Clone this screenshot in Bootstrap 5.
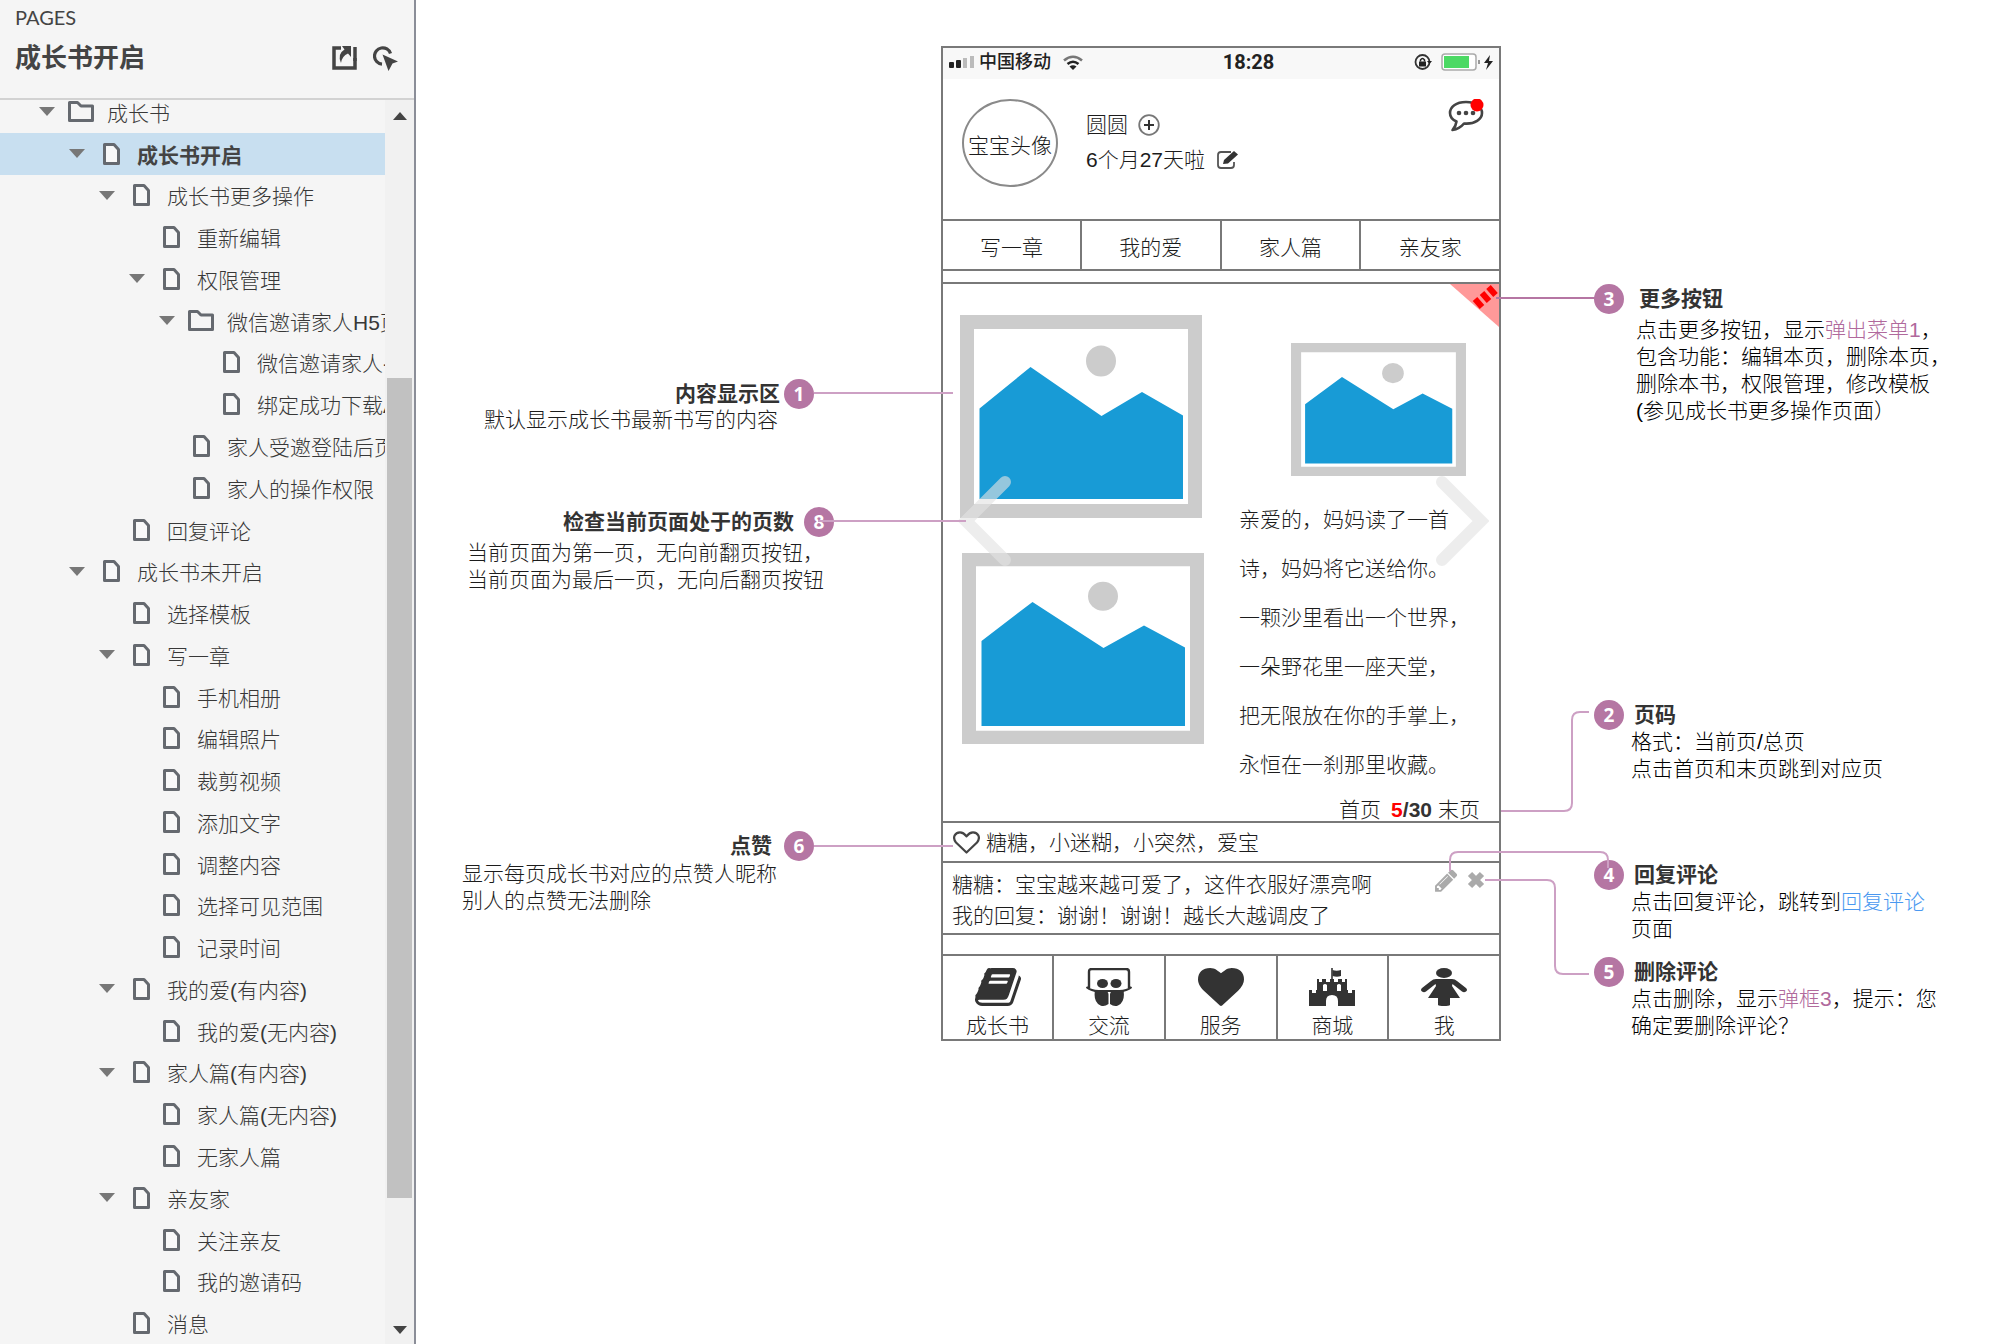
<!DOCTYPE html>
<html lang="zh-CN">
<head>
<meta charset="utf-8">
<meta name="viewport" content="width=device-width, initial-scale=1">
<title>成长书开启</title>
<link href="https://cdn.jsdelivr.net/npm/bootstrap@5.3.0/dist/css/bootstrap.min.css" rel="stylesheet">
<style>
  body { font-family: "Liberation Sans", "Noto Sans CJK SC", sans-serif; font-size: 21px; line-height: 27px; font-weight: 300; color: #1c1c1c; background: #fff; }
  a { color: inherit; text-decoration: none; }
  .plain-btn { background: none; border: 0; padding: 0; color: inherit; line-height: 0; }
  /* sidebar */
  .side { width: 416px; background: #f5f5f5; border-right: 2px solid #8b8e98; }
  .side-head { height: 100px; border-bottom: 2px solid #d2d2d2; padding: 3px 16px 0 15px; color: #444; }
  .side-label { font-family: Lato, sans-serif; font-size: 20px; line-height: 28px; font-weight: 400; }
  .side-title { font-size: 26px; line-height: 54px; font-weight: 700; margin: 0; }
  .tree { margin-top: -9px; height: calc(100% + 9px); color: #383838; }
  .tree li { flex: 1 1 0; min-height: 0; padding-left: calc(39px + 30px * var(--lv, 0)); gap: 13px; white-space: nowrap; }
  .tree a { padding-top: 3px; }
  .tree .current { background: #c8dff0; font-weight: 700; color: #444; }
  .twist { width: 16px; flex: none; }
  .kind { width: 26px; flex: none; text-align: center; line-height: 0; color: #65696f; }
  .bar-track { width: 29px; background: #f1f1f1; padding: 12px 2px 10px; }
  .bar-thumb { background: #c1c1c1; width: 25px; flex: 821; }
  /* phone */
  .phone { width: 560px; border: 2px solid #797979; margin-top: 46px; }
  .line-t { border-top: 2px solid #797979; }
  .line-b { border-bottom: 2px solid #797979; }
  .status { height: 31px; background: #f8f8f8; padding: 0 5px 3px 6px; font-size: 18px; font-weight: 500; color: #222; }
  .clock { font-family: Roboto, sans-serif; font-weight: 700; font-size: 20px; }
  .profile { height: 140px; padding: 20px 15px 0 19px; }
  .avatar { width: 96px; height: 88px; border: 2px solid #8a8a8a; border-radius: 50%; white-space: nowrap; padding-top: 5px; }
  .who { padding: 12px 0 0 28px; gap: 8px; }
  .tabs a { height: 48px; line-height: 54px; text-align: center; flex: 1 1 0; }
  .tabs a:first-child { flex: 0 0 137px; }
  .dock a:first-child { flex: 0 0 109px; }
  .tabs a + a, .dock a + a { border-left: 2px solid #797979; }
  .tabs { margin-bottom: 11px; }
  .pages { height: 537px; padding-left: 17px; gap: 35px; }
  .pages-left { width: 244px; padding-top: 31px; }
  .pages-right { width: 244px; padding-top: 59px; }
  .poem { line-height: 49px; margin: 19px 0 10px; white-space: nowrap; }
  .pager { line-height: 22px; gap: 6px; padding-right: 3px; }
  .pager b { font-weight: 700; color: #333; }
  .corner { position: absolute; top: 0; right: 0; }
  .turn-l { position: absolute; top: 189px; left: 15px; }
  .turn-r { position: absolute; top: 189px; right: 10px; }
  .likes { height: 40px; padding: 0 10px; gap: 6px; }
  .comments { height: 72px; padding: 6px 14px 0 9px; line-height: 31px; }
  .dock { margin-top: 19px; }
  .dock a { flex: 1 1 0; height: 83px; padding-top: 12px; text-align: center; line-height: 40px; }
  .dock svg { display: block; margin: 0 auto; }
  /* notes */
  .notes-l { width: 525px; padding-top: 380px; }
  .notes-r { padding-top: 285px; color: #000; }
  .note-head { height: 27px; gap: 10px; }
  .note-head h2 { font-size: 21px; line-height: 27px; font-weight: 700; color: #333; margin: 0; }
  .notes-l .note-head { padding-right: 127px; justify-content: flex-end; gap: 4px; }
  .notes-r .note-head { padding-left: 93px; }
  .notes-r p { padding-left: 130px; }
  .pin { width: 30px; height: 30px; flex: none; border-radius: 50%; background: #b576a3; color: #fff; font: 700 19px/30px "Open Sans", sans-serif; text-align: center; }
  .wires { position: absolute; left: 0; top: 0; pointer-events: none; }
  .mauve { color: #b0699c; }
  .sky { color: #4a98f0; }
</style>
<script src="https://cdn.jsdelivr.net/npm/bootstrap@5.3.0/dist/js/bootstrap.bundle.min.js"></script>
</head>
<body>
<svg width="0" height="0" class="position-absolute" aria-hidden="true">
  <symbol id="tri" viewBox="0 0 16 9"><path d="M0 0h16L8 9z" fill="#777"/></symbol>
  <symbol id="page" viewBox="0 0 17 22"><path d="M1.5 1.5h9.5l4.5 5v14h-14z" fill="#f8f8f8" stroke="currentColor" stroke-width="3" stroke-linejoin="round"/></symbol>
  <symbol id="folder" viewBox="0 0 26 21"><path d="M1.5 1.5h8l3.500 3.500h11.500v14.500h-23z" fill="none" stroke="currentColor" stroke-width="3" stroke-linejoin="round"/></symbol>
  <symbol id="photo" viewBox="0 0 242 203" preserveAspectRatio="none">
    <path d="M0 0h242v203H0z" fill="#ccc"/><path d="M14 14h214v175H14z" fill="#fff"/>
    <ellipse cx="141" cy="46" rx="15" ry="15.500" fill="#ccc"/>
    <path d="M19.500 93.500L70.500 52 141.500 101 182 77l41 23.500V184H19.500z" fill="#189bd6"/>
  </symbol>
</svg>

<div class="d-flex vh-100 overflow-hidden">
  <aside class="side d-flex flex-column flex-shrink-0">
    <header class="side-head">
      <div class="side-label text-uppercase">Pages</div>
      <div class="d-flex align-items-center">
        <h1 class="side-title me-auto">成长书开启</h1>
        <button class="plain-btn me-3" aria-label="在新窗口打开"><svg width="25" height="24" viewBox="0 0 25 24"><path d="M9 2H2v20h21V12" fill="none" stroke="#444" stroke-width="3.500"/><path d="M23 1v14" stroke="#444" stroke-width="3.500"/><path d="M10 0h9v11l-3-3.500Q10 10 9 17 5 8 12.500 3.500z" fill="#444"/></svg></button>
        <button class="plain-btn" aria-label="高亮交互元素"><svg width="25" height="25" viewBox="0 0 25 25"><path d="M17.500 7.500A8.200 8.200 0 1 0 9 18.200" fill="none" stroke="#444" stroke-width="3.200"/><path d="M9.500 8.500L25 15.500l-5.500 2-4 7.500z" fill="#444"/></svg></button>
      </div>
    </header>
    <div class="d-flex flex-fill overflow-hidden">
      <nav class="flex-fill overflow-hidden" aria-label="页面">
        <ul class="tree list-unstyled d-flex flex-column mb-0">
          <li class="d-flex align-items-center"><button class="plain-btn twist" aria-label="折叠"><svg width="16" height="9"><use href="#tri"/></svg></button><span class="kind"><svg width="26" height="21"><use href="#folder"/></svg></span><a href="#">成长书</a></li>
          <li class="d-flex align-items-center current" style="--lv:1"><button class="plain-btn twist" aria-label="折叠"><svg width="16" height="9"><use href="#tri"/></svg></button><span class="kind"><svg width="17" height="22"><use href="#page"/></svg></span><a href="#">成长书开启</a></li>
          <li class="d-flex align-items-center" style="--lv:2"><button class="plain-btn twist" aria-label="折叠"><svg width="16" height="9"><use href="#tri"/></svg></button><span class="kind"><svg width="17" height="22"><use href="#page"/></svg></span><a href="#">成长书更多操作</a></li>
          <li class="d-flex align-items-center" style="--lv:3"><span class="twist"></span><span class="kind"><svg width="17" height="22"><use href="#page"/></svg></span><a href="#">重新编辑</a></li>
          <li class="d-flex align-items-center" style="--lv:3"><button class="plain-btn twist" aria-label="折叠"><svg width="16" height="9"><use href="#tri"/></svg></button><span class="kind"><svg width="17" height="22"><use href="#page"/></svg></span><a href="#">权限管理</a></li>
          <li class="d-flex align-items-center" style="--lv:4"><button class="plain-btn twist" aria-label="折叠"><svg width="16" height="9"><use href="#tri"/></svg></button><span class="kind"><svg width="26" height="21"><use href="#folder"/></svg></span><a href="#">微信邀请家人H5页</a></li>
          <li class="d-flex align-items-center" style="--lv:5"><span class="twist"></span><span class="kind"><svg width="17" height="22"><use href="#page"/></svg></span><a href="#">微信邀请家人-</a></li>
          <li class="d-flex align-items-center" style="--lv:5"><span class="twist"></span><span class="kind"><svg width="17" height="22"><use href="#page"/></svg></span><a href="#">绑定成功下载A</a></li>
          <li class="d-flex align-items-center" style="--lv:4"><span class="twist"></span><span class="kind"><svg width="17" height="22"><use href="#page"/></svg></span><a href="#">家人受邀登陆后页</a></li>
          <li class="d-flex align-items-center" style="--lv:4"><span class="twist"></span><span class="kind"><svg width="17" height="22"><use href="#page"/></svg></span><a href="#">家人的操作权限</a></li>
          <li class="d-flex align-items-center" style="--lv:2"><span class="twist"></span><span class="kind"><svg width="17" height="22"><use href="#page"/></svg></span><a href="#">回复评论</a></li>
          <li class="d-flex align-items-center" style="--lv:1"><button class="plain-btn twist" aria-label="折叠"><svg width="16" height="9"><use href="#tri"/></svg></button><span class="kind"><svg width="17" height="22"><use href="#page"/></svg></span><a href="#">成长书未开启</a></li>
          <li class="d-flex align-items-center" style="--lv:2"><span class="twist"></span><span class="kind"><svg width="17" height="22"><use href="#page"/></svg></span><a href="#">选择模板</a></li>
          <li class="d-flex align-items-center" style="--lv:2"><button class="plain-btn twist" aria-label="折叠"><svg width="16" height="9"><use href="#tri"/></svg></button><span class="kind"><svg width="17" height="22"><use href="#page"/></svg></span><a href="#">写一章</a></li>
          <li class="d-flex align-items-center" style="--lv:3"><span class="twist"></span><span class="kind"><svg width="17" height="22"><use href="#page"/></svg></span><a href="#">手机相册</a></li>
          <li class="d-flex align-items-center" style="--lv:3"><span class="twist"></span><span class="kind"><svg width="17" height="22"><use href="#page"/></svg></span><a href="#">编辑照片</a></li>
          <li class="d-flex align-items-center" style="--lv:3"><span class="twist"></span><span class="kind"><svg width="17" height="22"><use href="#page"/></svg></span><a href="#">裁剪视频</a></li>
          <li class="d-flex align-items-center" style="--lv:3"><span class="twist"></span><span class="kind"><svg width="17" height="22"><use href="#page"/></svg></span><a href="#">添加文字</a></li>
          <li class="d-flex align-items-center" style="--lv:3"><span class="twist"></span><span class="kind"><svg width="17" height="22"><use href="#page"/></svg></span><a href="#">调整内容</a></li>
          <li class="d-flex align-items-center" style="--lv:3"><span class="twist"></span><span class="kind"><svg width="17" height="22"><use href="#page"/></svg></span><a href="#">选择可见范围</a></li>
          <li class="d-flex align-items-center" style="--lv:3"><span class="twist"></span><span class="kind"><svg width="17" height="22"><use href="#page"/></svg></span><a href="#">记录时间</a></li>
          <li class="d-flex align-items-center" style="--lv:2"><button class="plain-btn twist" aria-label="折叠"><svg width="16" height="9"><use href="#tri"/></svg></button><span class="kind"><svg width="17" height="22"><use href="#page"/></svg></span><a href="#">我的爱(有内容)</a></li>
          <li class="d-flex align-items-center" style="--lv:3"><span class="twist"></span><span class="kind"><svg width="17" height="22"><use href="#page"/></svg></span><a href="#">我的爱(无内容)</a></li>
          <li class="d-flex align-items-center" style="--lv:2"><button class="plain-btn twist" aria-label="折叠"><svg width="16" height="9"><use href="#tri"/></svg></button><span class="kind"><svg width="17" height="22"><use href="#page"/></svg></span><a href="#">家人篇(有内容)</a></li>
          <li class="d-flex align-items-center" style="--lv:3"><span class="twist"></span><span class="kind"><svg width="17" height="22"><use href="#page"/></svg></span><a href="#">家人篇(无内容)</a></li>
          <li class="d-flex align-items-center" style="--lv:3"><span class="twist"></span><span class="kind"><svg width="17" height="22"><use href="#page"/></svg></span><a href="#">无家人篇</a></li>
          <li class="d-flex align-items-center" style="--lv:2"><button class="plain-btn twist" aria-label="折叠"><svg width="16" height="9"><use href="#tri"/></svg></button><span class="kind"><svg width="17" height="22"><use href="#page"/></svg></span><a href="#">亲友家</a></li>
          <li class="d-flex align-items-center" style="--lv:3"><span class="twist"></span><span class="kind"><svg width="17" height="22"><use href="#page"/></svg></span><a href="#">关注亲友</a></li>
          <li class="d-flex align-items-center" style="--lv:3"><span class="twist"></span><span class="kind"><svg width="17" height="22"><use href="#page"/></svg></span><a href="#">我的邀请码</a></li>
          <li class="d-flex align-items-center" style="--lv:2"><span class="twist"></span><span class="kind"><svg width="17" height="22"><use href="#page"/></svg></span><a href="#">消息</a></li>
        </ul>
      </nav>
      <div class="bar-track d-flex flex-column align-items-center flex-shrink-0" aria-hidden="true">
        <svg width="14" height="8"><path d="M7 0l7 8H0z" fill="#444"/></svg>
        <div style="flex:258"></div><div class="bar-thumb"></div><div style="flex:128"></div>
        <svg width="14" height="8"><path d="M0 0h14L7 8z" fill="#444"/></svg>
      </div>
    </div>
  </aside>

  <main class="d-flex align-items-start flex-fill position-relative">
    <section class="notes-l flex-shrink-0">
      <article>
        <div class="note-head d-flex align-items-center"><h2>内容显示区</h2><span class="pin">1</span></div>
        <p style="margin:-1px 0 75px 68px">默认显示成长书最新书写的内容</p>
      </article>
      <article>
        <div class="note-head d-flex align-items-center" style="padding-right:107px;gap:10px"><h2>检查当前页面处于的页数</h2><span class="pin">8</span></div>
        <p style="margin:4px 0 239px 51px">当前页面为第一页，无向前翻页按钮，<br>当前页面为最后一页，无向后翻页按钮</p>
      </article>
      <article>
        <div class="note-head d-flex align-items-center" style="gap:12px"><h2>点赞</h2><span class="pin">6</span></div>
        <p style="margin:1px 0 0 46px">显示每页成长书对应的点赞人昵称<br>别人的点赞无法删除</p>
      </article>
    </section>

    <section class="phone flex-shrink-0">
      <div class="status d-flex align-items-center">
        <svg width="26" height="12" class="me-1"><g fill="#222"><rect y="6" width="5" height="6" rx="1"/><rect x="7" y="4" width="5" height="8" rx="1"/></g><g fill="#bbb"><rect x="14" y="2" width="4" height="10"/><rect x="21" width="4" height="12"/></g></svg>
        <span>中国移动</span>
        <svg width="20" height="15" viewBox="0 0 20 15" style="margin-left:12px"><g fill="none" stroke="#222" stroke-width="2.600"><path d="M1 5.500Q10-2 19 5.500" stroke="#777"/><path d="M4.500 9Q10 4.500 15.500 9"/></g><path d="M10 15L6.500 11.500q3.500-2.500 7 0z" fill="#222"/></svg>
        <span class="clock mx-auto">18:28</span>
        <svg width="80" height="18" viewBox="0 0 80 18"><circle cx="8.500" cy="9" r="7" fill="none" stroke="#333" stroke-width="1.800"/><path d="M5 8.500h7v5H5z" fill="#222"/><path d="M6.500 8.500V7q2-3 4 0v1.500" fill="none" stroke="#222" stroke-width="1.500"/><path d="M13 8h5l-2.500 3z" fill="#222"/><rect x="28" y="1" width="34" height="16" rx="3" fill="#fff" stroke="#aaa" stroke-width="1.500"/><rect x="30" y="3" width="25" height="12" fill="#4cd964"/><path d="M65 7v4" stroke="#999" stroke-width="2"/><path d="M76 2l-6 8h4l-2 7 7-9h-4z" fill="#222"/></svg>
      </div>
      <div class="profile d-flex">
        <div class="avatar d-flex align-items-center justify-content-center flex-shrink-0">宝宝头像</div>
        <div class="who d-flex flex-column me-auto">
          <div class="d-flex align-items-center gap-2 text-nowrap">圆圆 <button class="plain-btn" aria-label="添加"><svg width="24" height="22" viewBox="0 0 24 22"><circle cx="13" cy="11" r="9.800" fill="none" stroke="#777" stroke-width="1.800"/><path d="M13 6v10M8 11h10" stroke="#333" stroke-width="2"/></svg></button></div>
          <div class="d-flex align-items-center gap-2 text-nowrap">6个月27天啦 <button class="plain-btn" aria-label="编辑"><svg width="26" height="20" viewBox="0 0 26 20"><path d="M18 2H8Q5 2 5 5v10q0 3 3 3h10q3 0 3-3v-3" fill="none" stroke="#555" stroke-width="1.800"/><path d="M10 14l1-4L21 1l4 3.500-10 9z" fill="#333"/></svg></button></div>
        </div>
        <button class="plain-btn align-self-start" aria-label="消息"><svg width="36" height="34" viewBox="0 0 36 34"><path d="M18 3C8 3 2 8 2 14c0 4 3 7 6.500 8.500Q8 27 4.500 31q7-1 11.500-6.500C27 25.500 34 20 34 14S28 3 18 3z" fill="#fff" stroke="#444" stroke-width="2.600" stroke-linejoin="round"/><g fill="#444"><circle cx="11" cy="14" r="2.300"/><circle cx="18" cy="14" r="2.300"/><circle cx="25" cy="14" r="2.300"/></g><circle cx="29" cy="6" r="6.500" fill="#f00"/></svg></button>
      </div>
      <nav class="tabs d-flex line-t line-b"><a href="#">写一章</a><a href="#">我的爱</a><a href="#">家人篇</a><a href="#">亲友家</a></nav>
      <div class="line-t line-b">
        <div class="pages d-flex position-relative">
          <div class="pages-left flex-shrink-0">
            <svg width="242" height="203" class="d-block"><use href="#photo"/></svg>
            <svg width="242" height="191" class="d-block ms-auto" style="margin-top:35px"><use href="#photo" height="191" width="242"/></svg>
          </div>
          <div class="pages-right">
            <svg width="175" height="133" class="d-block" style="margin-left:52px"><use href="#photo" width="175" height="133"/></svg>
            <p class="poem">亲爱的，妈妈读了一首<br>诗，妈妈将它送给你。<br>一颗沙里看出一个世界，<br>一朵野花里一座天堂，<br>把无限放在你的手掌上，<br>永恒在一刹那里收藏。</p>
            <div class="pager d-flex justify-content-end text-nowrap"><a href="#" class="me-1">首页</a><b><span style="color:#f00">5</span>/30</b><a href="#">末页</a></div>
          </div>
          <button class="plain-btn corner" aria-label="更多"><svg width="49" height="43"><path d="M0 0h49v43z" fill="#f99"/><path d="M25 15l7 8M32 9l7 8M38.500 3l7 8" stroke="#f00" stroke-width="6"/></svg></button>
          <button class="plain-btn turn-l" aria-label="上一页"><svg width="54" height="96"><path d="M47 9L8 48l39 39" fill="none" stroke="#e2e2e2" stroke-opacity=".62" stroke-width="12" stroke-linecap="round"/></svg></button>
          <button class="plain-btn turn-r" aria-label="下一页"><svg width="54" height="96"><path d="M7 9l39 39L7 87" fill="none" stroke="#e2e2e2" stroke-opacity=".62" stroke-width="12" stroke-linecap="round"/></svg></button>
        </div>
      </div>
      <div class="likes d-flex align-items-center line-b">
        <svg width="27" height="23" viewBox="0 0 27 23"><path d="M13.500 21.500L3 11.500C-1 6.500 2 1.300 7 1.300c3.500 0 5 2 6.500 4 1.500-2 3-4 6.500-4 5 0 8 5.200 4 10.200z" fill="none" stroke="#444" stroke-width="2.200" stroke-linejoin="round"/></svg>
        <span>糖糖，小迷糊，小突然，爱宝</span>
      </div>
      <div class="comments d-flex line-b">
        <div class="me-auto text-nowrap">糖糖：宝宝越来越可爱了，这件衣服好漂亮啊<br>我的回复：谢谢！谢谢！越长大越调皮了</div>
        <button class="plain-btn align-self-start me-2" aria-label="回复"><svg width="24" height="24" viewBox="200 100 1500 1650"><path fill="#aaa" d="M491 1536l91-91-235-235-91 91v107h128v128h107zm523-928q0-22-22-22-10 0-17 7l-542 542q-7 7-7 17 0 22 22 22 10 0 17-7l542-542q7-7 7-17zm-54-192l416 416-832 832h-416v-416zm683 96q0 53-37 90l-166 166-416-416 166-165q36-38 90-38 53 0 91 38l235 234q37 39 37 91z"/></svg></button>
        <button class="plain-btn align-self-start" aria-label="删除"><svg width="18" height="22"><path d="M3 5l12 12M15 5L3 17" stroke="#aaa" stroke-width="6"/></svg></button>
      </div>
      <nav class="dock d-flex line-t">
        <a href="#"><svg width="46" height="38" viewBox="64 128 1664 1536" preserveAspectRatio="none"><path fill="#333" d="M1703 478q40 57 18 129l-275 906q-19 64-76.500 107.500t-122.500 43.500h-923q-77 0-148.500-53.500t-99.500-131.500q-24-67-2-127 0-4 3-27t4-37q1-8-3-21.500t-3-19.500q2-11 8-21t16.500-23.500 16.500-23.500q23-38 45-91.500t30-91.500q3-10 .5-30t-.5-28q3-11 17-28t17-23q21-36 42-92t25-90q1-9-2.500-32t.5-28q4-13 22-30.500t22-22.500q19-26 42.500-84.500t27.500-96.500q1-8-3-25.500t-2-26.500q2-8 9-18t18-23 17-21q8-12 16.500-30.500t15-35 16-36 19.500-32 26.500-23.500 36-11.500 47.500 5.500l-1 3q38-9 51-9h761q74 0 114 56t18 130l-274 906q-36 119-71.500 153.500t-128.500 34.500h-869q-27 0-38 15-11 16-1 43 24 70 144 70h923q29 0 56-15.500t35-41.500l300-987q7-22 5-57 38 15 59 43zm-1064 2q-4 13 2 22.500t20 9.500h608q13 0 25.500-9.500t16.500-22.500l21-64q4-13-2-22.500t-20-9.500h-608q-13 0-25.500 9.500t-16.500 22.500zm-83 256q-4 13 2 22.500t20 9.500h608q13 0 25.500-9.500t16.500-22.500l21-64q4-13-2-22.500t-20-9.500h-608q-13 0-25.500 9.500t-16.500 22.500z"/></svg>成长书</a>
        <a href="#"><svg width="46" height="38" viewBox="0 0 46 38"><path d="M3 20V4q0-3 3-3h34q3 0 3 3v16" fill="none" stroke="#333" stroke-width="2.400"/><path d="M.5 19q5 4.500 14 4h17q9 .5 14-4" fill="none" stroke="#333" stroke-width="2"/><ellipse cx="16.500" cy="15.500" rx="5.500" ry="4.500" fill="#333"/><ellipse cx="30" cy="15.500" rx="5.500" ry="4.500" fill="#333"/><path d="M9 22q6 1 9 .5 4.500.5 4.500 4V36q-4 3-8 1.500Q7 34 9 22zM37.500 22q-6 1-9 .5-4.500.5-4.500 4V36q4 3 8 1.500Q39.500 34 37.500 22z" fill="#333"/></svg>交流</a>
        <a href="#"><svg width="46" height="38" viewBox="0 128 1792 1536" preserveAspectRatio="none"><path fill="#333" d="M896 1664q-26 0-44-18l-624-602q-10-8-27.500-26t-55.500-65.500-68-97.500-53.500-121-23.500-138q0-220 127-344t351-124q62 0 126.500 21.500t120 58 95.500 68.500 76 68q36-36 76-68t95.500-68.500 120-58 126.500-21.500q224 0 351 124t127 344q0 221-229 450l-623 600q-18 18-44 18z"/></svg>服务</a>
        <a href="#"><svg width="46" height="38" viewBox="0 0 46 38"><path d="M0 22h3v3h4v-3h1V11h2v3h3v-3h4v3h4v-3h4v3h4v-3h4v3h3v-3h2v11h1v3h4v-3h3v16H29v-5q0-6-6-6t-6 6v5H0zM14 17v6h4v-6q-2-2-4 0zM28 17v6h4v-6q-2-2-4 0z" fill="#333" fill-rule="evenodd"/><path d="M23 12V0" stroke="#333" stroke-width="1.600"/><path d="M23.500 2q4 1.500 8.500 0v6q-4 1.500-8.500 0z" fill="#333"/></svg>商城</a>
        <a href="#"><svg width="46" height="38" viewBox="0 0 46 38"><ellipse cx="23" cy="5" rx="8" ry="5" fill="#333"/><path d="M15 11h16q3 0 5 2l9 7q2 2 0 3.500t-4 0L31.500 16l-.5 2 8 12H29v7q-1 1-6 1t-6-1v-7H7l8-12-.5-2L5 23.500q-2 1.500-4 0T1 20l9-7q2-2 5-2z" fill="#333"/></svg>我</a>
      </nav>
    </section>

    <section class="notes-r flex-fill">
      <article>
        <div class="note-head d-flex align-items-center" style="gap:15px"><span class="pin">3</span><h2>更多按钮</h2></div>
        <p style="margin:4px 0 277px 5px">点击更多按钮，显示<a href="#" class="mauve">弹出菜单1</a>，<br>包含功能：编辑本页，删除本页，<br>删除本书，权限管理，修改模板<br>(参见成长书更多操作页面）</p>
      </article>
      <article>
        <div class="note-head d-flex align-items-center"><span class="pin">2</span><h2>页码</h2></div>
        <p style="margin-bottom:79px">格式：当前页/总页<br>点击首页和末页跳到对应页</p>
      </article>
      <article>
        <div class="note-head d-flex align-items-center"><span class="pin">4</span><h2>回复评论</h2></div>
        <p class="mb-3">点击回复评论，跳转到<a href="#" class="sky">回复评论</a><br>页面</p>
      </article>
      <article>
        <div class="note-head d-flex align-items-center"><span class="pin">5</span><h2>删除评论</h2></div>
        <p class="mb-0">点击删除，显示<a href="#" class="mauve">弹框3</a>，提示：您<br>确定要删除评论？</p>
      </article>
    </section>

    <svg class="wires" width="1582" height="1344" viewBox="416 0 1582 1344" aria-hidden="true">
      <g fill="none" stroke="#cda0c4" stroke-width="2">
        <path d="M814 393h139M818 521h148M814 846h139"/>
        <path d="M1496 298h99" stroke="#b576a3"/>
        <path d="M1501 811h63q8 0 8-8v-83q0-8 8-8h9"/>
        <path d="M1450 871v-11q0-8 8-8h142q8 0 8 8v8"/>
        <path d="M1485 880h62q8 0 8 8v78q0 8 8 8h26"/>
      </g>
    </svg>
  </main>
</div>
</body>
</html>
